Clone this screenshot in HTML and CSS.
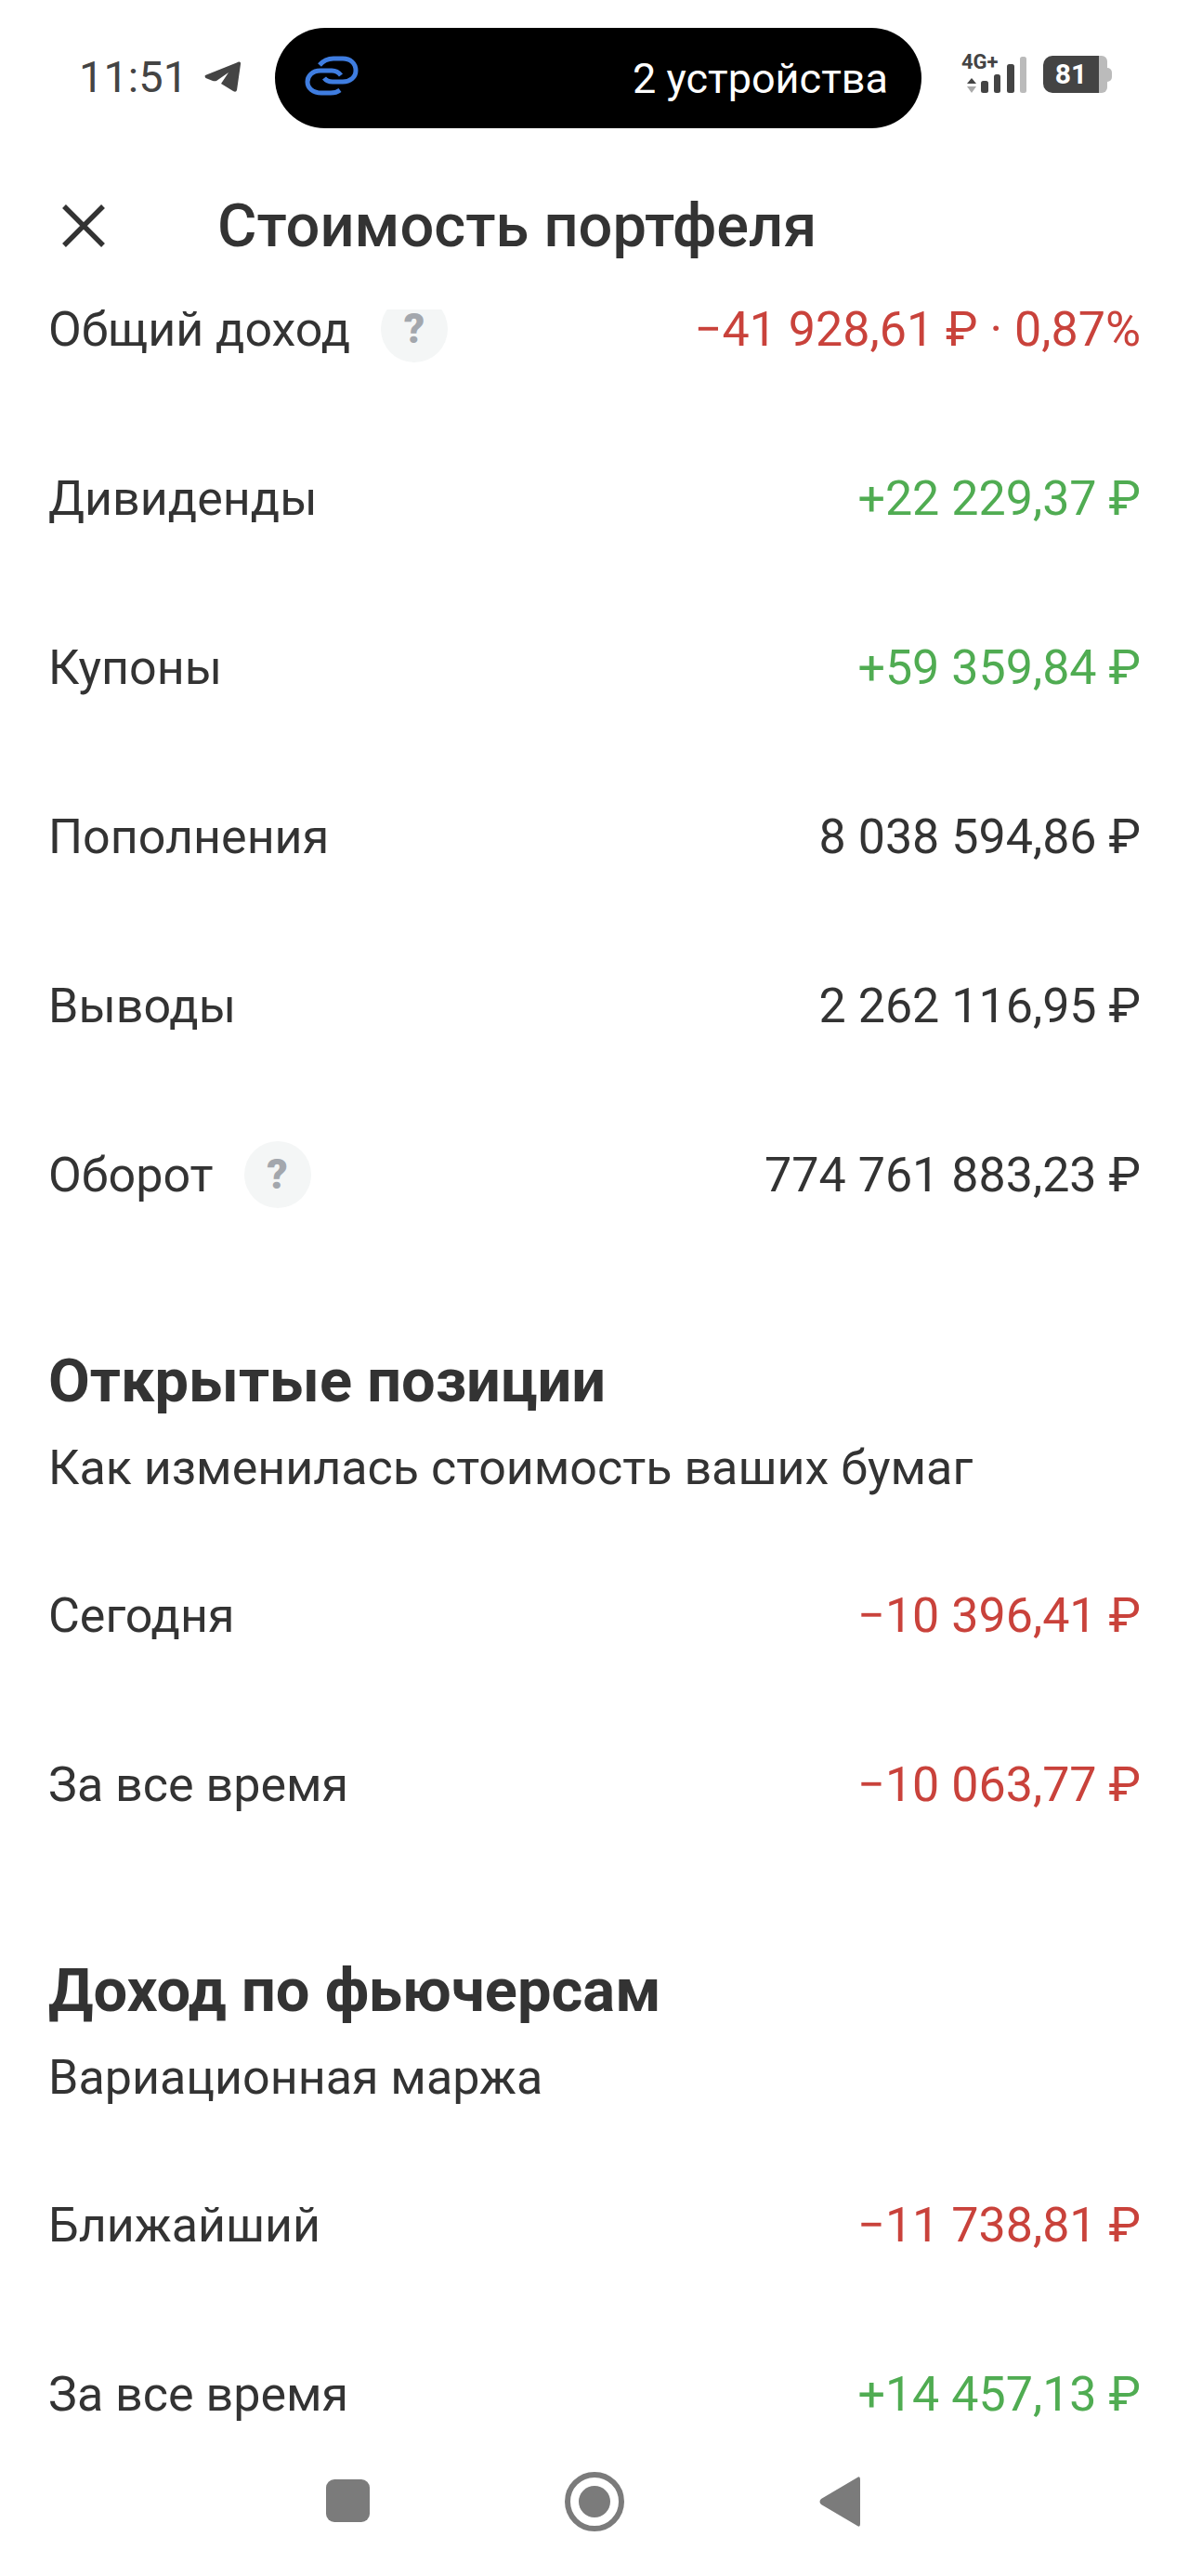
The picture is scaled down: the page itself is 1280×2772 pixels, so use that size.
FILE: index.html
```html
<!DOCTYPE html>
<html lang="ru">
<head>
    <meta charset="UTF-8">
    <title>Стоимость портфеля</title>
    <link rel="stylesheet" href="styles.css">
</head>
<body>
    <div class="screen">
        <div class="statusbar">
            <span class="time">11:51</span>
            <svg class="tg" width="40" height="34" viewBox="0 0 40 34"><path d="M1 15 L37 0.500 Q39.500 0 39 3 L35 31 Q34 34 31 32 L18 24 L26 12 L13 21 Q11 21.500 9 21 L1.500 18 Q0 16 1 15 Z" fill="#444"/></svg>
            <div class="pill">
                <svg class="link" width="58" height="43" viewBox="0 0 58 43"><g fill="none" stroke="#3f7de0" stroke-width="5"><path d="M39 21 Q35 15.500 28 16 H17 C8 16 3 22 3 28 C3 35 9 40 18 40 H28 Q34 40 38 37"/><path d="M21 24 Q24 28 30 28 H41 C49 28 55 23 55 16 C55 8 49 3 41 3 H31 Q22 3 16 10"/></g></svg>
                <span class="pill-text">2 устройства</span>
            </div>
            <svg class="signal" width="72" height="42" viewBox="0 0 72 42">
                <text class="net" x="1" y="16">4G+</text>
                <path d="M12 26 L17 32 H7 Z" fill="#444"/><path d="M7 35 H17 L12 42 Z" fill="#aaa"/>
                <rect x="22" y="29" width="8" height="13" rx="2.500" fill="#444"/>
                <rect x="36" y="22" width="7" height="20" rx="2.500" fill="#444"/>
                <rect x="50" y="11" width="8" height="31" rx="2.500" fill="#444"/>
                <rect x="64" y="3" width="7" height="39" rx="2.500" fill="#bbb"/>
            </svg>
            <div class="battery">
                <span class="battery-level">81</span><span class="battery-rest"></span><span class="battery-tip"></span>
            </div>
        </div>

        <div class="topbar">
            <svg class="close" width="46" height="46" viewBox="0 0 46 46"><path d="M2 2 L44 44 M44 2 L2 44" stroke="#333" stroke-width="5.500" fill="none"/></svg>
            <h1 class="title">Стоимость портфеля</h1>
        </div>

        <div class="scroll">
            <div class="scroll-inner">
                <div class="row"><span class="label">Общий доход<span class="hint">?</span></span><span class="neg">−41 928,61 ₽ · 0,87%</span></div>
                <div class="row"><span class="label">Дивиденды</span><span class="pos">+22 229,37 ₽</span></div>
                <div class="row"><span class="label">Купоны</span><span class="pos">+59 359,84 ₽</span></div>
                <div class="row"><span class="label">Пополнения</span><span>8 038 594,86 ₽</span></div>
                <div class="row"><span class="label">Выводы</span><span>2 262 116,95 ₽</span></div>
                <div class="row"><span class="label">Оборот<span class="hint">?</span></span><span>774 761 883,23 ₽</span></div>

                <div class="section">
                    <h2>Открытые позиции</h2>
                    <p>Как изменилась стоимость ваших бумаг</p>
                </div>
                <div class="row"><span class="label">Сегодня</span><span class="neg">−10 396,41 ₽</span></div>
                <div class="row"><span class="label">За все время</span><span class="neg">−10 063,77 ₽</span></div>

                <div class="section">
                    <h2>Доход по фьючерсам</h2>
                    <p>Вариационная маржа</p>
                </div>
                <div class="row"><span class="label">Ближайший</span><span class="neg">−11 738,81 ₽</span></div>
                <div class="row"><span class="label">За все время</span><span class="pos">+14 457,13 ₽</span></div>
            </div>
        </div>

        <div class="navbar">
            <span class="nav-square"></span>
            <span class="nav-home"><span class="nav-dot"></span></span>
            <svg class="nav-back" width="44" height="54" viewBox="0 0 44 54"><path d="M41 1 Q44 -1 44 3 V51 Q44 55 41 53 L2 30 Q-1 27 2 24 Z" fill="#7b7b7b"/></svg>
        </div>
    </div>
</body>
</html>
```

FILE: styles.css
```css
* { box-sizing: border-box; }
html, body { margin: 0; padding: 0; background: #fff; }
body { font-family: Roboto, "Noto Sans", sans-serif; color: #333; }

.screen { width: 1280px; height: 2772px; display: flex; flex-direction: column; overflow: hidden; background: #fff; }

/* status bar */
.statusbar { height: 160px; flex: none; display: flex; align-items: flex-start; padding: 30px 0 0 85px; }
.time { font-size: 47px; line-height: 106px; color: #444; width: 135px; }
.tg { margin-top: 36px; margin-right: 36px; }
.pill { width: 696px; height: 108px; background: #000; border-radius: 54px; display: flex; align-items: center; justify-content: space-between; padding: 0 36px 0 32px; }
.link { margin-top: -6px; }
.pill-text { color: #fff; font-size: 45px; }
.signal { margin: 28px 0 0 42px; flex: none; }
.net { font-family: Roboto, sans-serif; font-size: 22px; font-weight: 700; fill: #444; }
.battery { display: flex; align-items: center; margin: 30px 0 0 17px; }
.battery-level { width: 60px; height: 40px; background: #444; border-radius: 10px 0 0 10px; color: #fff; font-size: 30px; font-weight: 700; line-height: 40px; text-align: center; }
.battery-rest { width: 9px; height: 40px; background: #bbb; border-radius: 0 6px 6px 0; }
.battery-tip { width: 5px; height: 15px; background: #bbb; border-radius: 0 5px 5px 0; }

/* top bar */
.topbar { height: 173px; flex: none; display: flex; align-items: center; padding: 0 0 7px 67px; }
.close { flex: none; }
.title { margin: 0 0 0 121px; font-size: 65px; font-weight: 500; color: #333; white-space: nowrap; }

/* scrolled list */
.scroll { flex: 1; overflow: hidden; }
.scroll-inner { margin-top: -70px; }
.row { height: 182px; padding: 0 52px; display: flex; align-items: center; justify-content: space-between; font-size: 52px; white-space: nowrap; }
.label { display: flex; align-items: center; }
.hint { width: 72px; height: 72px; margin-left: 33px; border-radius: 50%; background: #f4f6f6; color: #a3a7ad; font-size: 44px; font-weight: 900; text-align: center; line-height: 72px; }
.neg { color: #c9423b; }
.pos { color: #50ac52; }

.section { padding: 84px 52px 20px; }
.section h2 { margin: 0; font-size: 65px; font-weight: 700; line-height: 94px; color: #333; }
.section p { margin: 0; font-size: 52px; line-height: 94px; }

/* bottom nav */
.navbar { height: 152px; flex: none; background: #fff; position: relative; }
.nav-square { position: absolute; left: 351px; top: 48px; width: 47px; height: 46px; background: #7b7b7b; border-radius: 9px; }
.nav-home { position: absolute; left: 608px; top: 40px; width: 64px; height: 64px; border: 6px solid #7b7b7b; border-radius: 50%; display: flex; align-items: center; justify-content: center; }
.nav-dot { width: 34px; height: 34px; background: #7b7b7b; border-radius: 50%; }
.nav-back { position: absolute; left: 882px; top: 45px; }
```
